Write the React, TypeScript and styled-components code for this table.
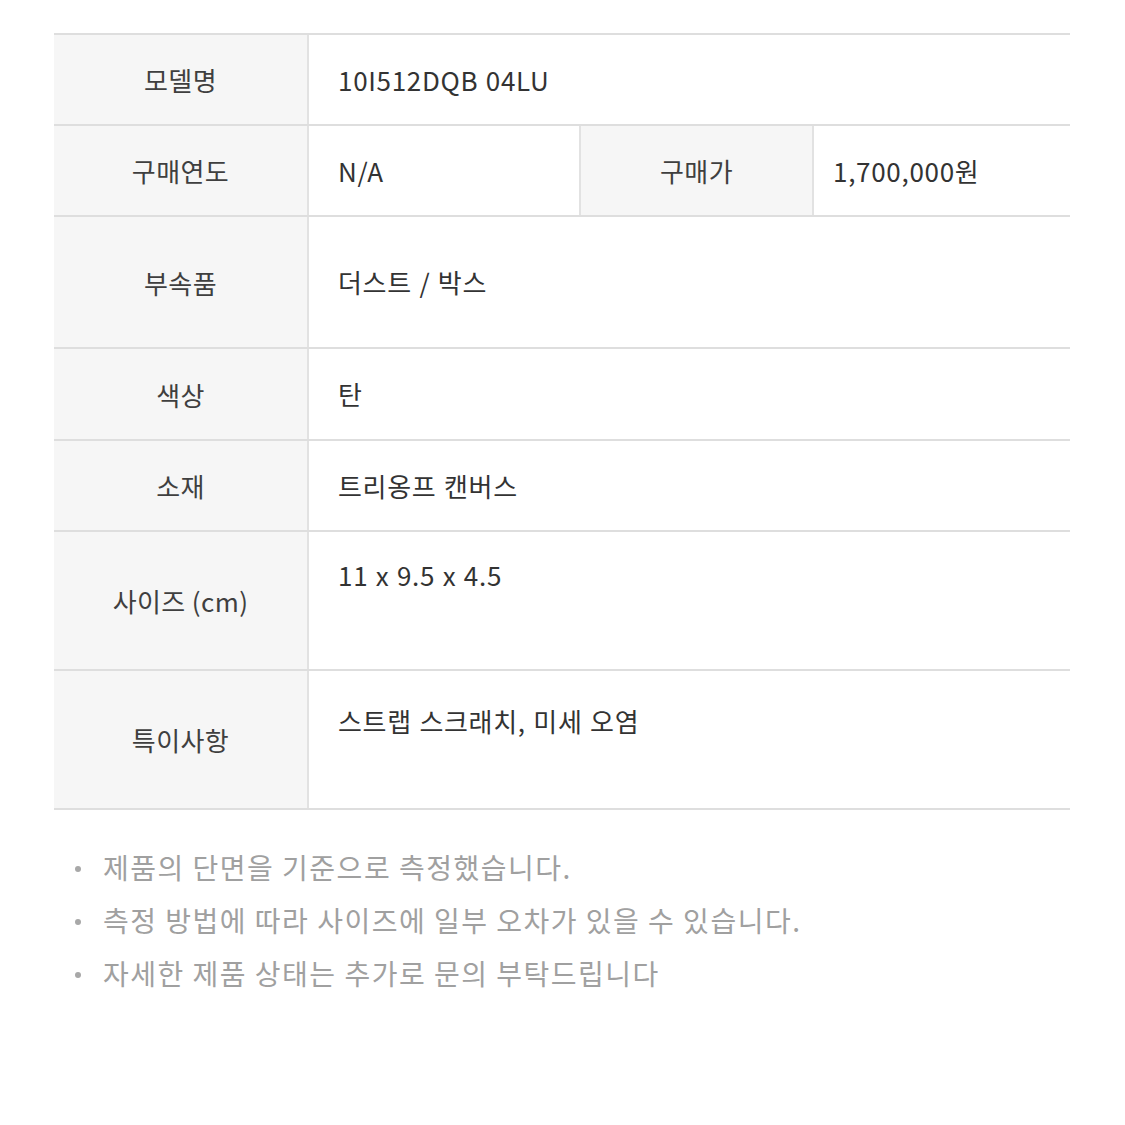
import React from 'react';
import styled, { createGlobalStyle } from "styled-components";

const GlobalStyle = createGlobalStyle`
    body {
        margin: 0;
        background: #ffffff;
        font-family: "Noto Sans CJK KR", "Noto Sans", sans-serif;
    }
`

type SpecRow = {
    label: string;
    value: string;
    height: number;
    top?: number;
    extraLabel?: string;
    extraValue?: string;
}

const rows: SpecRow[] = [
    { label: "모델명", value: "10I512DQB 04LU", height: 91 },
    { label: "구매연도", value: "N/A", height: 91, extraLabel: "구매가", extraValue: "1,700,000원" },
    { label: "부속품", value: "더스트 / 박스", height: 132 },
    { label: "색상", value: "탄", height: 92 },
    { label: "소재", value: "트리옹프 캔버스", height: 91 },
    { label: "사이즈 (cm)", value: "11 x 9.5 x 4.5", height: 139, top: 25 },
    { label: "특이사항", value: "스트랩 스크래치, 미세 오염", height: 139, top: 32 },
]

const notes = [
    "제품의 단면을 기준으로 측정했습니다.",
    "측정 방법에 따라 사이즈에 일부 오차가 있을 수 있습니다.",
    "자세한 제품 상태는 추가로 문의 부탁드립니다",
]

export default function App() {
    return (
        <Page>
            <GlobalStyle />
            <Table>
                {rows.map((row) => (
                    <Row key={row.label} $height={row.height} $split={!!row.extraLabel}>
                        <Label>{row.label}</Label>
                        <Value $top={row.top} $pad={29}>{row.value}</Value>
                        {row.extraLabel && (
                            <>
                                <Label $bordered>{row.extraLabel}</Label>
                                <Value $pad={19}>{row.extraValue}</Value>
                            </>
                        )}
                    </Row>
                ))}
            </Table>
            <Notes>
                {notes.map((n) => (
                    <Note key={n}>{n}</Note>
                ))}
            </Notes>
        </Page>
    );
}

const Page = styled.div`
    width: 1016px;
    padding: 33px 0 0 54px;
`

const Table = styled.div`
    display: flex;
    flex-direction: column;
    border-top: 2px solid #dedede;
`

const Row = styled.div<{ $height: number; $split: boolean }>`
    display: grid;
    grid-template-columns: ${(p) => (p.$split ? "255px 270px 235px 1fr" : "255px 1fr")};
    height: ${(p) => p.$height}px;
    border-bottom: 2px solid #dedede;
    box-sizing: border-box;
`

const Label = styled.div<{ $bordered?: boolean }>`
    display: flex;
    align-items: center;
    justify-content: center;
    background: #f6f6f6;
    border-right: 2px solid #e2e2e2;
    border-left: ${(p) => (p.$bordered ? "2px solid #e2e2e2" : "none")};
    color: #3f3f3f;
    font-size: 26px;
    letter-spacing: 0.4px;
`

const Value = styled.div<{ $top?: number; $pad: number }>`
    display: flex;
    align-items: ${(p) => (p.$top !== undefined ? "flex-start" : "center")};
    padding: ${(p) => (p.$top !== undefined ? `${p.$top}px` : "0")} 0 0 ${(p) => p.$pad}px;
    color: #333333;
    font-size: 26px;
    line-height: 36px;
    letter-spacing: 0.7px;
    word-spacing: 1px;
`

const Notes = styled.ul`
    list-style: none;
    margin: 31px 0 0;
    padding: 0;
`

const Note = styled.li`
    position: relative;
    padding-left: 49px;
    font-size: 28px;
    line-height: 53px;
    color: #a0a0a0;
    letter-spacing: 1.5px;

    &::before {
        content: "";
        position: absolute;
        left: 21px;
        top: 25px;
        width: 6px;
        height: 6px;
        border-radius: 50%;
        background: #a8a8a8;
    }
`
